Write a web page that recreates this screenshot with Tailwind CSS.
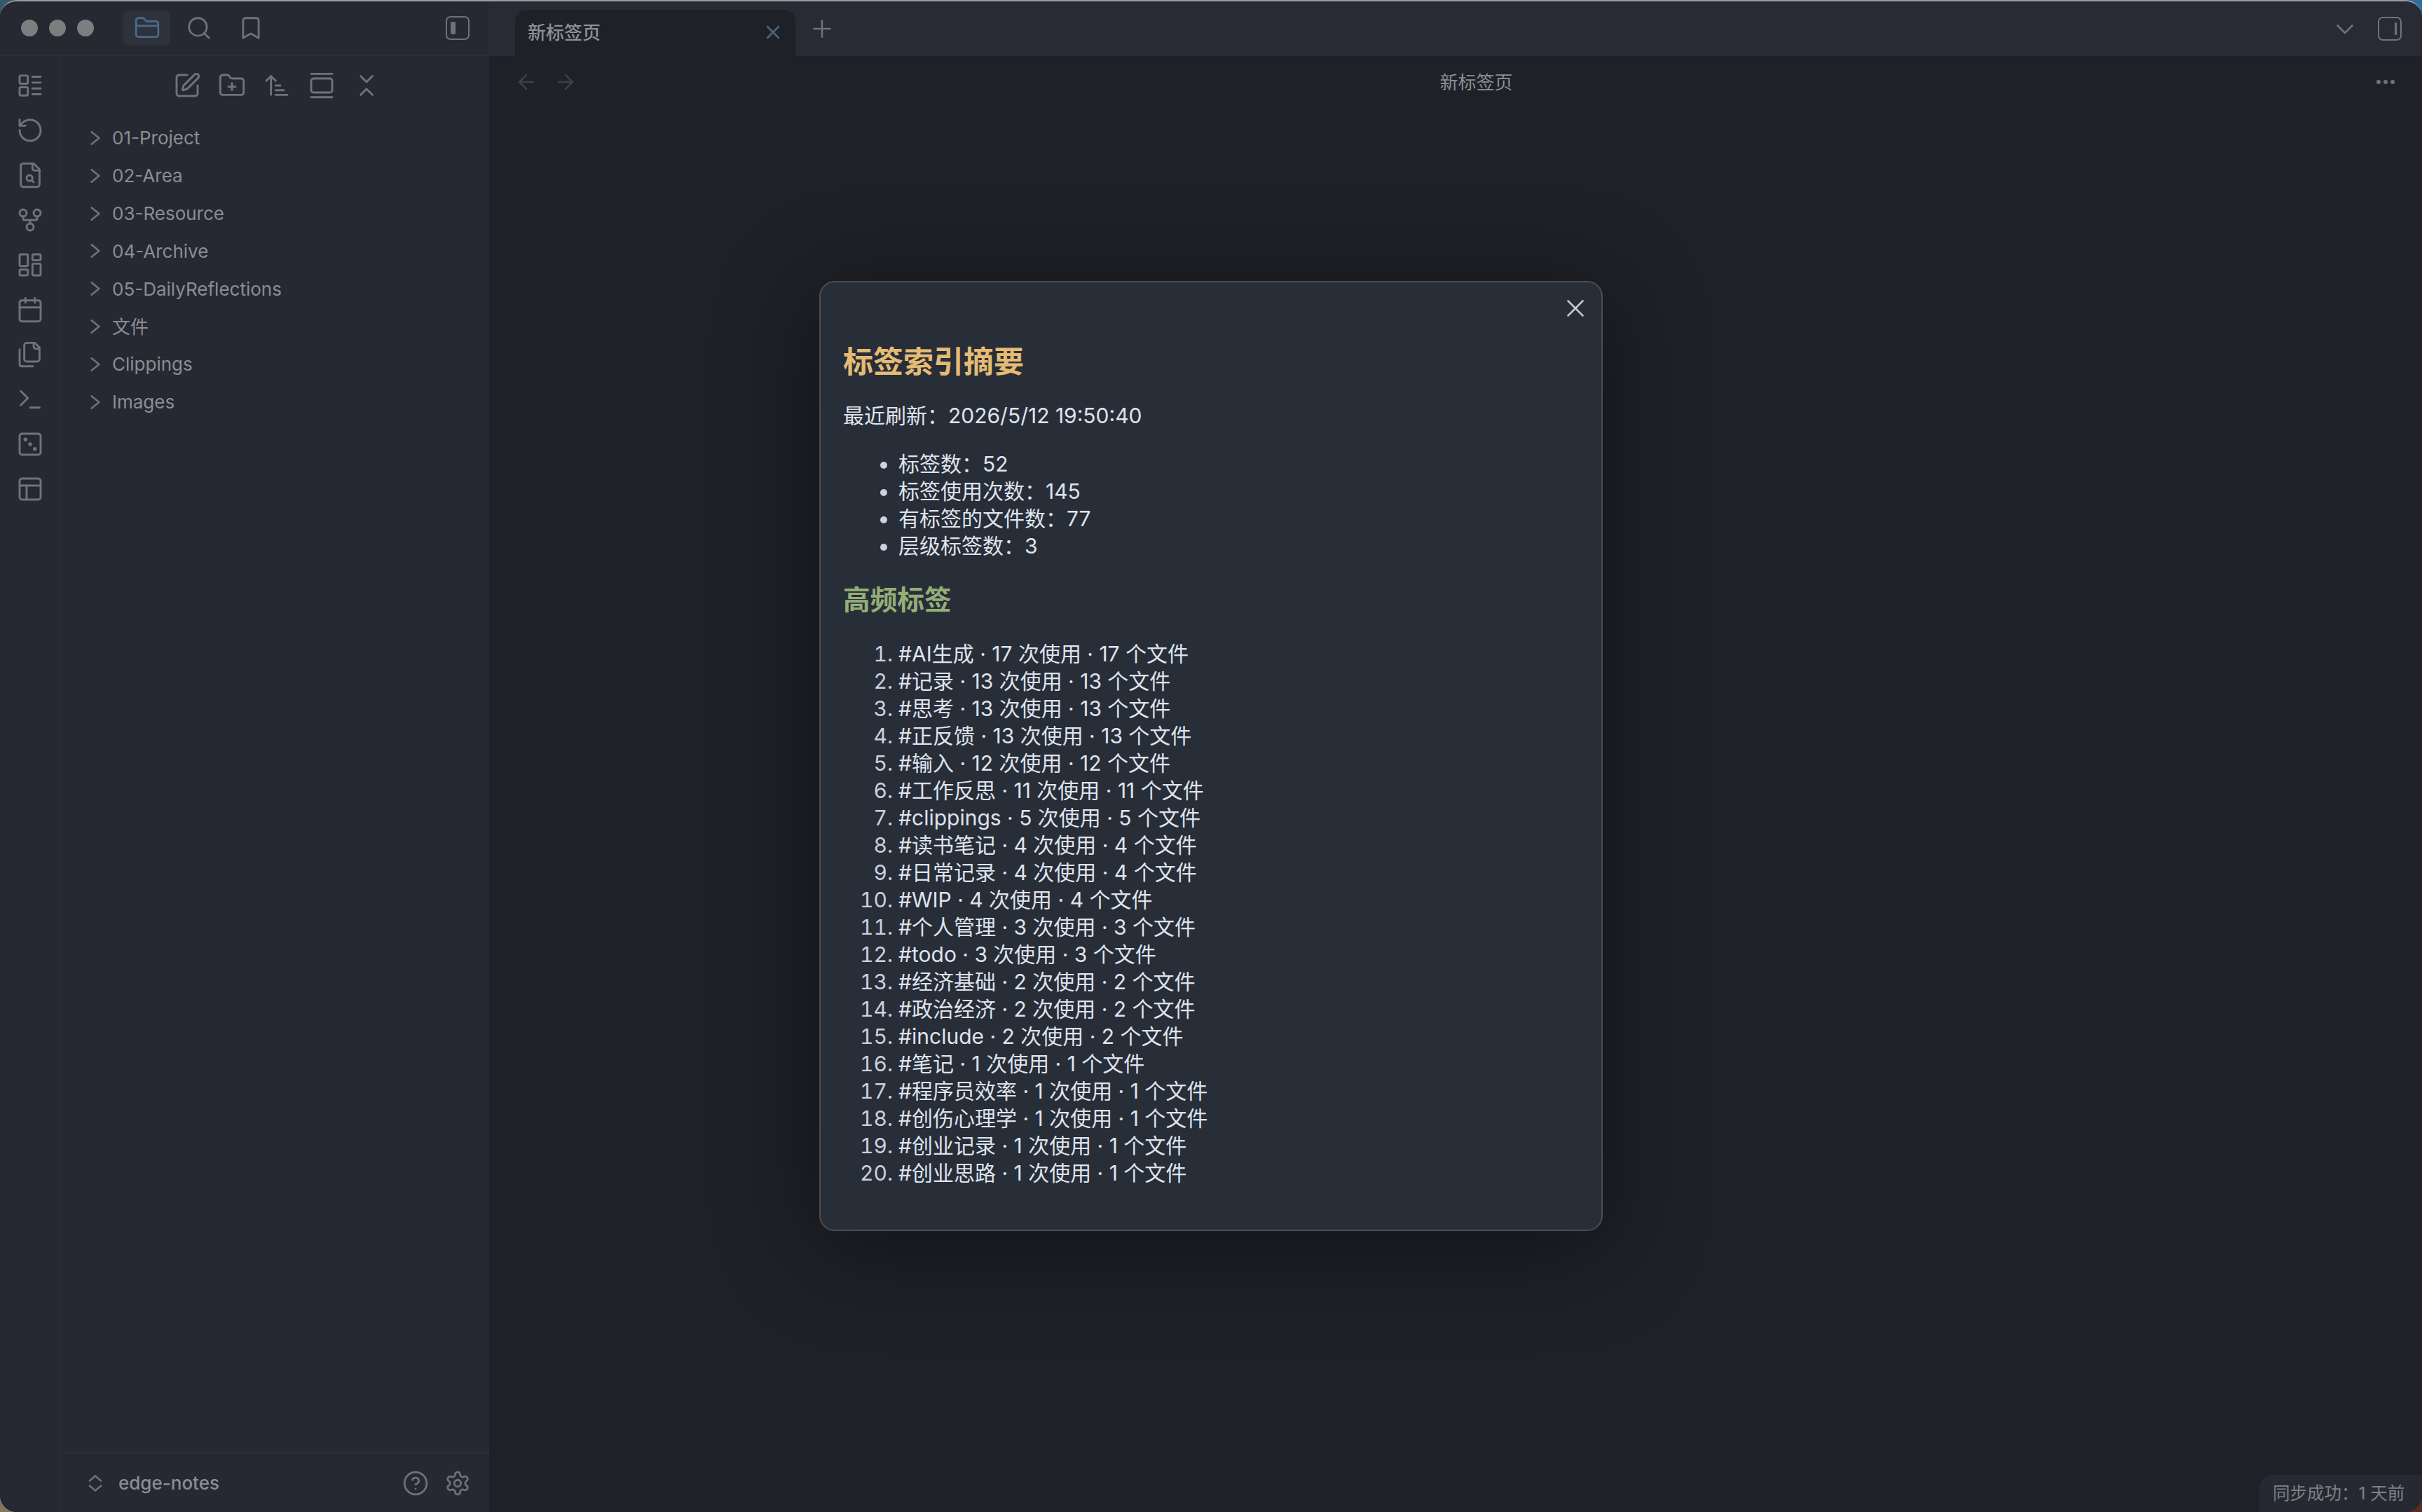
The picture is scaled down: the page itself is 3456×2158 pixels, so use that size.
<!DOCTYPE html>
<html lang="zh">
<head>
  <meta charset="UTF-8">
  <title>新标签页</title>
  <script src="https://cdn.jsdelivr.net/npm/@tailwindcss/browser@4"></script>
</head>
<body class="w-[3456px] h-[2158px] overflow-hidden bg-[conic-gradient(#2f6d9c_0_25%,#5a2c22_25%_50%,#85765e_50%_75%,#35586a_75%)] font-[Inter,'Noto_Sans_CJK_SC',sans-serif]">

  <!-- Window -->
  <div class="relative flex w-full h-full overflow-hidden rounded-[24px] border-t-2 border-[#9b9d9f] bg-[#1f2128]">

    <!-- Left column -->
    <div class="flex flex-col w-[698px] shrink-0 bg-[#262932] text-[#6f7278]">
      <!-- Title bar, left part -->
      <div class="flex items-center h-[78px] shrink-0 border-b-2 border-[#2a2e38]">
        <div class="flex gap-[16px] ml-[30px] w-[146px]">
          <span class="w-[24px] h-[24px] rounded-full bg-[#7d7e80]"></span>
          <span class="w-[24px] h-[24px] rounded-full bg-[#7d7e80]"></span>
          <span class="w-[24px] h-[24px] rounded-full bg-[#7d7e80]"></span>
        </div>
        <div class="flex items-center justify-center w-[67px] h-[50px] rounded-[8px] bg-[#2e323b] text-[#4a6a8c]">
          <svg class="w-[38px] h-[38px]" viewBox="0 0 24 24" fill="none" stroke="currentColor" stroke-width="1.75" stroke-linecap="round" stroke-linejoin="round"><path d="M20 20a2 2 0 0 0 2-2V8a2 2 0 0 0-2-2h-7.9a2 2 0 0 1-1.69-.9L9.6 3.9A2 2 0 0 0 7.93 3H4a2 2 0 0 0-2 2v13a2 2 0 0 0 2 2Z"/><path d="M2 10h20"/></svg>
        </div>
        <div class="flex items-center justify-center w-[74px] ml-[4px]">
          <svg class="w-[38px] h-[38px]" viewBox="0 0 24 24" fill="none" stroke="currentColor" stroke-width="1.75" stroke-linecap="round" stroke-linejoin="round"><circle cx="11" cy="11" r="8"/><path d="m21 21-4.3-4.3"/></svg>
        </div>
        <div class="flex items-center justify-center w-[74px]">
          <svg class="w-[38px] h-[38px]" viewBox="0 0 24 24" fill="none" stroke="currentColor" stroke-width="1.75" stroke-linecap="round" stroke-linejoin="round"><path d="m19 21-7-4-7 4V5a2 2 0 0 1 2-2h10a2 2 0 0 1 2 2v16z"/></svg>
        </div>
        <div class="ml-auto mr-[28px] flex items-center w-[34px] h-[34px] rounded-[7px] border-[2.5px] border-[#6f7278] pl-[5px]">
          <span class="w-[7px] h-[18px] rounded-[2px] bg-[#6f7278]"></span>
        </div>
      </div>

      <div class="flex flex-1 min-h-0">
        <!-- Ribbon -->
        <div class="flex flex-col items-center w-[87px] shrink-0 pt-[10px] border-r-2 border-[#2a2e38]">
          <div class="flex items-center justify-center h-[64px] w-full"><svg class="w-[40px] h-[40px]" viewBox="0 0 24 24" fill="none" stroke="currentColor" stroke-width="1.75" stroke-linecap="round" stroke-linejoin="round"><rect x="3" y="3.5" width="7" height="7" rx="1"/><rect x="3" y="13.5" width="7" height="7" rx="1"/><path d="M14 4.5h7"/><path d="M14 9.5h7"/><path d="M14 14.5h7"/><path d="M14 19.5h7"/></svg></div>
          <div class="flex items-center justify-center h-[64px] w-full"><svg class="w-[40px] h-[40px]" viewBox="0 0 24 24" fill="none" stroke="currentColor" stroke-width="1.75" stroke-linecap="round" stroke-linejoin="round"><path d="M3 12a9 9 0 1 0 9-9 9.75 9.75 0 0 0-6.74 2.74L3 8"/><path d="M3 3v5h5"/></svg></div>
          <div class="flex items-center justify-center h-[64px] w-full"><svg class="w-[40px] h-[40px]" viewBox="0 0 24 24" fill="none" stroke="currentColor" stroke-width="1.75" stroke-linecap="round" stroke-linejoin="round"><path d="M14 2v4a2 2 0 0 0 2 2h4"/><path d="M15 2H6a2 2 0 0 0-2 2v16a2 2 0 0 0 2 2h12a2 2 0 0 0 2-2V7z"/><circle cx="11.5" cy="14.5" r="2.5"/><path d="M13.3 16.3 15 18"/></svg></div>
          <div class="flex items-center justify-center h-[64px] w-full"><svg class="w-[40px] h-[40px]" viewBox="0 0 24 24" fill="none" stroke="currentColor" stroke-width="1.75" stroke-linecap="round" stroke-linejoin="round"><circle cx="12" cy="18" r="3"/><circle cx="6" cy="6" r="3"/><circle cx="18" cy="6" r="3"/><path d="M18 9v2c0 .6-.4 1-1 1H7c-.6 0-1-.4-1-1V9"/><path d="M12 12v3"/></svg></div>
          <div class="flex items-center justify-center h-[64px] w-full"><svg class="w-[40px] h-[40px]" viewBox="0 0 24 24" fill="none" stroke="currentColor" stroke-width="1.75" stroke-linecap="round" stroke-linejoin="round"><rect x="3" y="3" width="7" height="10" rx="1"/><rect x="14" y="3" width="7" height="5" rx="1"/><rect x="14" y="11" width="7" height="10" rx="1"/><rect x="3" y="16" width="7" height="5" rx="1"/></svg></div>
          <div class="flex items-center justify-center h-[64px] w-full"><svg class="w-[40px] h-[40px]" viewBox="0 0 24 24" fill="none" stroke="currentColor" stroke-width="1.75" stroke-linecap="round" stroke-linejoin="round"><path d="M8 2v4"/><path d="M16 2v4"/><rect x="3" y="4" width="18" height="18" rx="2"/><path d="M3 10h18"/></svg></div>
          <div class="flex items-center justify-center h-[64px] w-full"><svg class="w-[40px] h-[40px]" viewBox="0 0 24 24" fill="none" stroke="currentColor" stroke-width="1.75" stroke-linecap="round" stroke-linejoin="round"><path d="M20 7h-3a2 2 0 0 1-2-2V2"/><path d="M9 18a2 2 0 0 1-2-2V4a2 2 0 0 1 2-2h7l4 4v10a2 2 0 0 1-2 2Z"/><path d="M3 7.6v12.8A1.6 1.6 0 0 0 4.6 22h9.8"/></svg></div>
          <div class="flex items-center justify-center h-[64px] w-full"><svg class="w-[40px] h-[40px]" viewBox="0 0 24 24" fill="none" stroke="currentColor" stroke-width="1.75" stroke-linecap="round" stroke-linejoin="round"><path d="m4 17 6-6-6-6"/><path d="M12 19h8"/></svg></div>
          <div class="flex items-center justify-center h-[64px] w-full"><svg class="w-[40px] h-[40px]" viewBox="0 0 24 24" fill="none" stroke="currentColor" stroke-width="1.75" stroke-linecap="round" stroke-linejoin="round"><rect x="3" y="3" width="18" height="18" rx="2"/><circle cx="8" cy="8" r=".8" fill="currentColor"/><circle cx="12" cy="12" r=".8" fill="currentColor"/><circle cx="16" cy="16" r=".8" fill="currentColor"/></svg></div>
          <div class="flex items-center justify-center h-[64px] w-full"><svg class="w-[40px] h-[40px]" viewBox="0 0 24 24" fill="none" stroke="currentColor" stroke-width="1.75" stroke-linecap="round" stroke-linejoin="round"><rect x="3" y="3" width="18" height="18" rx="2"/><path d="M3 9h18"/><path d="M9 21V9"/></svg></div>
        </div>

        <!-- File explorer -->
        <div class="flex flex-col flex-1 min-w-0">
          <div class="flex items-center justify-center h-[84px] shrink-0 pl-[4px]">
            <div class="flex items-center justify-center w-[64px]"><svg class="w-[40px] h-[40px]" viewBox="0 0 24 24" fill="none" stroke="currentColor" stroke-width="1.75" stroke-linecap="round" stroke-linejoin="round"><path d="M12 3H5a2 2 0 0 0-2 2v14a2 2 0 0 0 2 2h14a2 2 0 0 0 2-2v-7"/><path d="M18.375 2.625a1 1 0 0 1 3 3l-9.013 9.014a2 2 0 0 1-.853.505l-2.873.84a.5.5 0 0 1-.62-.62l.84-2.873a2 2 0 0 1 .506-.852z"/></svg></div>
            <div class="flex items-center justify-center w-[64px]"><svg class="w-[40px] h-[40px]" viewBox="0 0 24 24" fill="none" stroke="currentColor" stroke-width="1.75" stroke-linecap="round" stroke-linejoin="round"><path d="M12 10v6"/><path d="M9 13h6"/><path d="M20 20a2 2 0 0 0 2-2V8a2 2 0 0 0-2-2h-7.9a2 2 0 0 1-1.69-.9L9.6 3.9A2 2 0 0 0 7.93 3H4a2 2 0 0 0-2 2v13a2 2 0 0 0 2 2Z"/></svg></div>
            <div class="flex items-center justify-center w-[64px]"><svg class="w-[40px] h-[40px]" viewBox="0 0 24 24" fill="none" stroke="currentColor" stroke-width="1.75" stroke-linecap="round" stroke-linejoin="round"><path d="m3 8 4-4 4 4"/><path d="M7 4v16"/><path d="M11 12h4"/><path d="M11 16h7"/><path d="M11 20h10"/></svg></div>
            <div class="flex items-center justify-center w-[64px]"><svg class="w-[40px] h-[40px]" viewBox="0 0 24 24" fill="none" stroke="currentColor" stroke-width="1.75" stroke-linecap="round" stroke-linejoin="round"><path d="M3 2h18"/><rect x="3" y="6" width="18" height="12" rx="2"/><path d="M3 22h18"/></svg></div>
            <div class="flex items-center justify-center w-[64px]"><svg class="w-[40px] h-[40px]" viewBox="0 0 24 24" fill="none" stroke="currentColor" stroke-width="1.75" stroke-linecap="round" stroke-linejoin="round"><path d="m7 20 5-5 5 5"/><path d="m7 4 5 5 5-5"/></svg></div>
          </div>

          <div class="flex-1 pt-[6px] pl-[36px] text-[26px] text-[#8b8d93]">
            <div class="flex items-center h-[53.85px] gap-[11px]"><svg class="w-[26px] h-[26px]" viewBox="0 0 24 24" fill="none" stroke="#6f7278" stroke-width="2.4" stroke-linecap="round" stroke-linejoin="round"><path d="m7 20 10-8-10-8"/></svg>01-Project</div>
            <div class="flex items-center h-[53.85px] gap-[11px]"><svg class="w-[26px] h-[26px]" viewBox="0 0 24 24" fill="none" stroke="#6f7278" stroke-width="2.4" stroke-linecap="round" stroke-linejoin="round"><path d="m7 20 10-8-10-8"/></svg>02-Area</div>
            <div class="flex items-center h-[53.85px] gap-[11px]"><svg class="w-[26px] h-[26px]" viewBox="0 0 24 24" fill="none" stroke="#6f7278" stroke-width="2.4" stroke-linecap="round" stroke-linejoin="round"><path d="m7 20 10-8-10-8"/></svg>03-Resource</div>
            <div class="flex items-center h-[53.85px] gap-[11px]"><svg class="w-[26px] h-[26px]" viewBox="0 0 24 24" fill="none" stroke="#6f7278" stroke-width="2.4" stroke-linecap="round" stroke-linejoin="round"><path d="m7 20 10-8-10-8"/></svg>04-Archive</div>
            <div class="flex items-center h-[53.85px] gap-[11px]"><svg class="w-[26px] h-[26px]" viewBox="0 0 24 24" fill="none" stroke="#6f7278" stroke-width="2.4" stroke-linecap="round" stroke-linejoin="round"><path d="m7 20 10-8-10-8"/></svg>05-DailyReflections</div>
            <div class="flex items-center h-[53.85px] gap-[11px]"><svg class="w-[26px] h-[26px]" viewBox="0 0 24 24" fill="none" stroke="#6f7278" stroke-width="2.4" stroke-linecap="round" stroke-linejoin="round"><path d="m7 20 10-8-10-8"/></svg>文件</div>
            <div class="flex items-center h-[53.85px] gap-[11px]"><svg class="w-[26px] h-[26px]" viewBox="0 0 24 24" fill="none" stroke="#6f7278" stroke-width="2.4" stroke-linecap="round" stroke-linejoin="round"><path d="m7 20 10-8-10-8"/></svg>Clippings</div>
            <div class="flex items-center h-[53.85px] gap-[11px]"><svg class="w-[26px] h-[26px]" viewBox="0 0 24 24" fill="none" stroke="#6f7278" stroke-width="2.4" stroke-linecap="round" stroke-linejoin="round"><path d="m7 20 10-8-10-8"/></svg>Images</div>
          </div>

          <!-- Vault bar -->
          <div class="flex items-center h-[85px] shrink-0 border-t-2 border-[#2a2e38] pl-[35px] pr-[26px]">
            <svg class="w-[28px] h-[28px] mr-[19px]" viewBox="0 0 24 24" fill="none" stroke="#6f7278" stroke-width="2" stroke-linecap="round" stroke-linejoin="round"><path d="m5 15 7 6 7-6"/><path d="m5 9 7-6 7 6"/></svg>
            <span class="text-[26px] text-[#8b8d93] font-medium">edge-notes</span>
            <svg class="ml-auto w-[38px] h-[38px]" viewBox="0 0 24 24" fill="none" stroke="currentColor" stroke-width="1.75" stroke-linecap="round" stroke-linejoin="round"><circle cx="12" cy="12" r="10"/><path d="M9.09 9a3 3 0 0 1 5.83 1c0 2-3 3-3 3"/><path d="M12 17h.01"/></svg>
            <svg class="ml-[22px] w-[38px] h-[38px]" viewBox="0 0 24 24" fill="none" stroke="currentColor" stroke-width="1.75" stroke-linecap="round" stroke-linejoin="round"><path d="M12.22 2h-.44a2 2 0 0 0-2 2v.18a2 2 0 0 1-1 1.73l-.43.25a2 2 0 0 1-2 0l-.15-.08a2 2 0 0 0-2.73.73l-.22.38a2 2 0 0 0 .73 2.73l.15.1a2 2 0 0 1 1 1.72v.51a2 2 0 0 1-1 1.74l-.15.09a2 2 0 0 0-.73 2.73l.22.38a2 2 0 0 0 2.73.73l.15-.08a2 2 0 0 1 2 0l.43.25a2 2 0 0 1 1 1.73V20a2 2 0 0 0 2 2h.44a2 2 0 0 0 2-2v-.18a2 2 0 0 1 1-1.73l.43-.25a2 2 0 0 1 2 0l.15.08a2 2 0 0 0 2.73-.73l.22-.39a2 2 0 0 0-.73-2.73l-.15-.08a2 2 0 0 1-1-1.74v-.5a2 2 0 0 1 1-1.74l.15-.09a2 2 0 0 0 .73-2.73l-.22-.38a2 2 0 0 0-2.73-.73l-.15.08a2 2 0 0 1-2 0l-.43-.25a2 2 0 0 1-1-1.73V4a2 2 0 0 0-2-2z"/><circle cx="12" cy="12" r="3"/></svg>
          </div>
        </div>
      </div>
    </div>

    <!-- Main column -->
    <div class="flex flex-col flex-1 min-w-0 text-[#6f7278]">
      <!-- Tab strip -->
      <div class="flex items-end h-[78px] shrink-0 bg-[#282b33] pl-[37px]">
        <div class="flex items-center justify-between w-[400px] h-[66px] rounded-t-[16px] bg-[#1f2128] pl-[18px] pr-[16px] pb-[2px]">
          <span class="text-[26px] font-medium text-[#8e9095]">新标签页</span>
          <svg class="w-[32px] h-[32px]" viewBox="0 0 24 24" fill="none" stroke="#4d6278" stroke-width="2" stroke-linecap="round"><path d="M18 6 6 18"/><path d="m6 6 12 12"/></svg>
        </div>
        <div class="self-center ml-[18px]">
          <svg class="w-[40px] h-[40px]" viewBox="0 0 24 24" fill="none" stroke="currentColor" stroke-width="1.5" stroke-linecap="round"><path d="M5 12h14"/><path d="M12 5v14"/></svg>
        </div>
        <div class="self-center ml-auto flex items-center">
          <svg class="w-[36px] h-[36px]" viewBox="0 0 24 24" fill="none" stroke="currentColor" stroke-width="1.75" stroke-linecap="round" stroke-linejoin="round"><path d="m5 9 7 7 7-7"/></svg>
          <div class="flex justify-end items-center w-[34px] h-[34px] ml-[29px] mr-[29px] rounded-[7px] border-[2.5px] border-[#6f7278] pr-[5px]">
            <span class="w-[3px] h-[18px] rounded-[2px] bg-[#6f7278]"></span>
          </div>
        </div>
      </div>

      <!-- View header -->
      <div class="flex items-center h-[74px] shrink-0 pl-[36px] pr-[37px]">
        <svg class="w-[34px] h-[34px]" viewBox="0 0 24 24" fill="none" stroke="#3e4046" stroke-width="1.75" stroke-linecap="round" stroke-linejoin="round"><path d="m12 19-7-7 7-7"/><path d="M19 12H5"/></svg>
        <svg class="w-[34px] h-[34px] ml-[22px]" viewBox="0 0 24 24" fill="none" stroke="#3e4046" stroke-width="1.75" stroke-linecap="round" stroke-linejoin="round"><path d="M5 12h14"/><path d="m12 5 7 7-7 7"/></svg>
        <span class="flex-1 text-center text-[26px] text-[#8b8d93]">新标签页</span>
        <svg class="w-[30px] h-[10px]" viewBox="0 0 30 10" fill="#6f7278"><circle cx="5" cy="5" r="3"/><circle cx="15" cy="5" r="3"/><circle cx="25" cy="5" r="3"/></svg>
      </div>
    </div>

    <!-- Sync status -->
    <div class="absolute right-0 bottom-0 flex items-center w-[232px] h-[53px] pl-[19px] rounded-tl-[20px] bg-[#262932] text-[24.5px] text-[#7f8187]">同步成功：1 天前</div>

    <!-- Tag summary modal -->
    <div class="absolute left-[1169px] top-[399px] w-[1118px] h-[1356px] rounded-[22px] border-2 border-[#4b4d51] bg-[#282e38] px-[32px] pt-[84px] text-[30px] leading-[39px] text-[#dfe3ee] shadow-[0_20px_140px_rgba(0,0,0,0.45)]">
      <svg class="absolute right-[16px] top-[16px] w-[42px] h-[42px]" viewBox="0 0 24 24" fill="none" stroke="#c4c6cb" stroke-width="1.5" stroke-linecap="round"><path d="M18 6 6 18"/><path d="m6 6 12 12"/></svg>

      <h2 class="text-[43px] leading-[58px] font-bold text-[#e5bb74]">标签索引摘要</h2>
      <p class="mt-[29px]">最近刷新：2026/5/12 19:50:40</p>
      <ul class="mt-[30px] pl-[79px] list-disc marker:text-[#ccd0e0]">
        <li>标签数：52</li>
        <li>标签使用次数：145</li>
        <li>有标签的文件数：77</li>
        <li>层级标签数：3</li>
      </ul>
      <h3 class="mt-[31px] text-[38.7px] leading-[52px] font-bold text-[#95ae77]">高频标签</h3>
      <ol class="mt-[32px] pl-[79px] list-decimal marker:text-[#ccd0e0]">
        <li>#AI生成 · 17 次使用 · 17 个文件</li>
        <li>#记录 · 13 次使用 · 13 个文件</li>
        <li>#思考 · 13 次使用 · 13 个文件</li>
        <li>#正反馈 · 13 次使用 · 13 个文件</li>
        <li>#输入 · 12 次使用 · 12 个文件</li>
        <li>#工作反思 · 11 次使用 · 11 个文件</li>
        <li>#clippings · 5 次使用 · 5 个文件</li>
        <li>#读书笔记 · 4 次使用 · 4 个文件</li>
        <li>#日常记录 · 4 次使用 · 4 个文件</li>
        <li>#WIP · 4 次使用 · 4 个文件</li>
        <li>#个人管理 · 3 次使用 · 3 个文件</li>
        <li>#todo · 3 次使用 · 3 个文件</li>
        <li>#经济基础 · 2 次使用 · 2 个文件</li>
        <li>#政治经济 · 2 次使用 · 2 个文件</li>
        <li>#include · 2 次使用 · 2 个文件</li>
        <li>#笔记 · 1 次使用 · 1 个文件</li>
        <li>#程序员效率 · 1 次使用 · 1 个文件</li>
        <li>#创伤心理学 · 1 次使用 · 1 个文件</li>
        <li>#创业记录 · 1 次使用 · 1 个文件</li>
        <li>#创业思路 · 1 次使用 · 1 个文件</li>
      </ol>
    </div>
  </div>

</body>
</html>
